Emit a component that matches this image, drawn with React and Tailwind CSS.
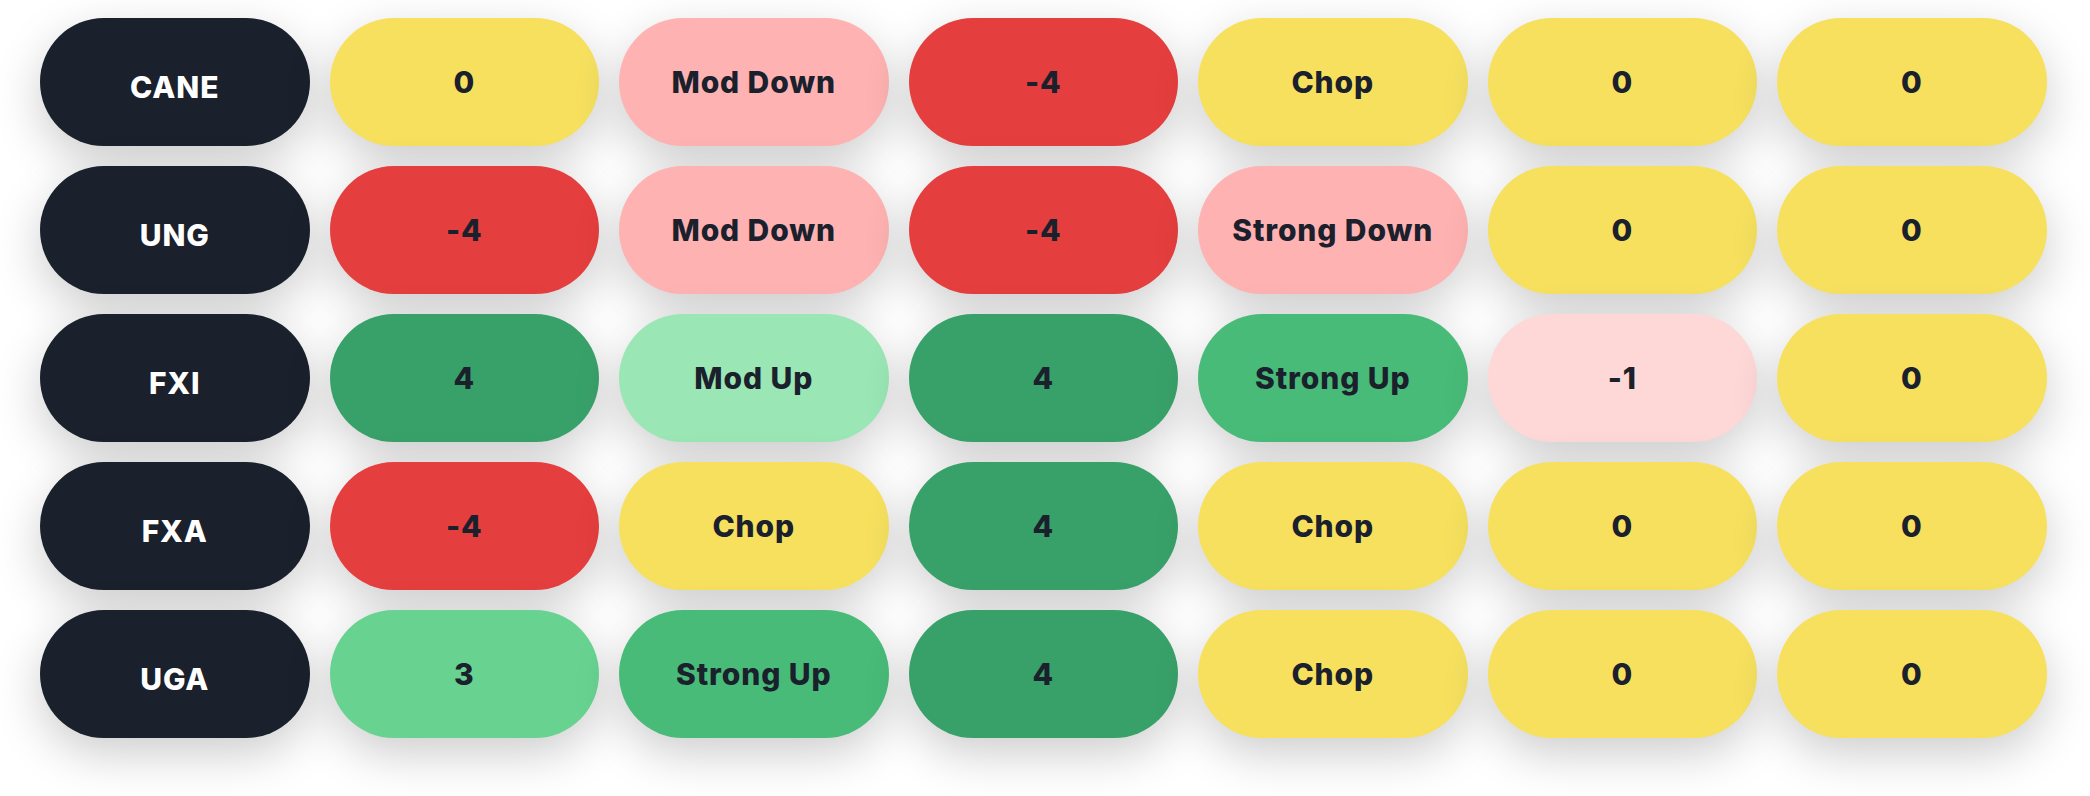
import React from "react";

const colors = {
  yellow: "bg-[#f6e05e]",
  red: "bg-[#e53e3e]",
  pink: "bg-[#feb2b2]",
  blush: "bg-[#fed7d7]",
  green: "bg-[#38a169]",
  mint: "bg-[#48bb78]",
  lime: "bg-[#68d391]",
  pale: "bg-[#9ae6b4]",
};

const rows = [
  {
    ticker: "CANE",
    cells: [
      ["0", "yellow"],
      ["Mod Down", "pink"],
      ["-4", "red"],
      ["Chop", "yellow"],
      ["0", "yellow"],
      ["0", "yellow"],
    ],
  },
  {
    ticker: "UNG",
    cells: [
      ["-4", "red"],
      ["Mod Down", "pink"],
      ["-4", "red"],
      ["Strong Down", "pink"],
      ["0", "yellow"],
      ["0", "yellow"],
    ],
  },
  {
    ticker: "FXI",
    cells: [
      ["4", "green"],
      ["Mod Up", "pale"],
      ["4", "green"],
      ["Strong Up", "mint"],
      ["-1", "blush"],
      ["0", "yellow"],
    ],
  },
  {
    ticker: "FXA",
    cells: [
      ["-4", "red"],
      ["Chop", "yellow"],
      ["4", "green"],
      ["Chop", "yellow"],
      ["0", "yellow"],
      ["0", "yellow"],
    ],
  },
  {
    ticker: "UGA",
    cells: [
      ["3", "lime"],
      ["Strong Up", "mint"],
      ["4", "green"],
      ["Chop", "yellow"],
      ["0", "yellow"],
      ["0", "yellow"],
    ],
  },
];

const Pill = ({ children, className }) => {
  return (
    <div
      className={
        "h-[128px] rounded-full flex items-center justify-center shadow-[0_16px_48px_rgba(0,0,0,0.2)] text-[30px] font-extrabold tracking-[0.03em] " +
        className
      }
    >
      {children}
    </div>
  );
};

export default function App() {
  return (
    <div
      className="min-h-[796px] bg-white pl-[40px] pt-[18px]"
      style={{ fontFamily: "Inter, 'Noto Sans', sans-serif" }}
    >
      <div className="grid grid-cols-[repeat(7,269.5px)] gap-x-[20px] gap-y-[20px]">
        {rows.map((row) => (
          <React.Fragment key={row.ticker}>
            <Pill className="bg-[#1a202c] text-white pt-2.5">{row.ticker}</Pill>
            {row.cells.map(([label, tone], i) => (
              <Pill key={i} className={colors[tone] + " text-[#1a202c]"}>
                {label}
              </Pill>
            ))}
          </React.Fragment>
        ))}
      </div>
    </div>
  );
}
